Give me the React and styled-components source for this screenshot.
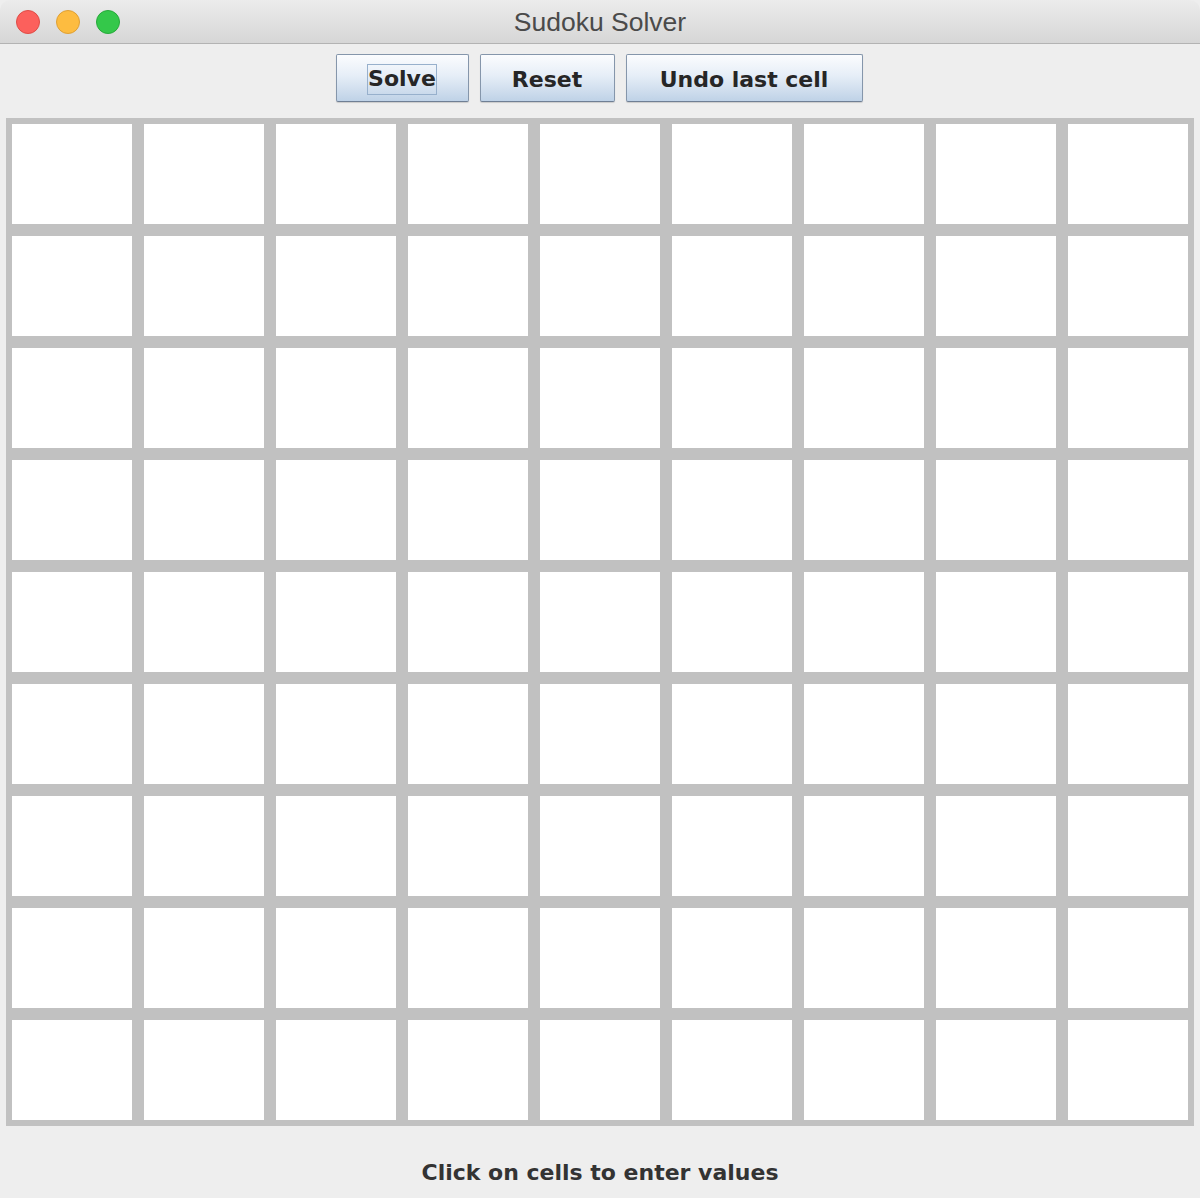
import React from 'react'
import styled, { createGlobalStyle } from 'styled-components'

const GlobalStyle = createGlobalStyle`
  html, body {
    margin: 0;
    padding: 0;
    background: #ffffff;
  }
  body {
    font-family: "DejaVu Sans", "Liberation Sans", sans-serif;
  }
`

const SIZE = 9

const App = () => {
  const cells = Array.from({ length: SIZE * SIZE }, (_, i) => i)

  return (
    <Window>
      <GlobalStyle />
      <TitleBar>
        <Lights>
          <Light color="#fc605c" edge="#df4c46" />
          <Light color="#fdbc40" edge="#dfa034" />
          <Light color="#34c84a" edge="#27a93a" />
        </Lights>
        <Title>Sudoku Solver</Title>
      </TitleBar>

      <Toolbar>
        <Button width={133}>
          <Focus>Solve</Focus>
        </Button>
        <Button width={135}>Reset</Button>
        <Button width={237}>Undo last cell</Button>
      </Toolbar>

      <Board>
        {cells.map(i => (
          <Cell key={i} />
        ))}
      </Board>

      <Status>Click on cells to enter values</Status>
    </Window>
  )
}

export default App

const Window = styled.div`
  width: 1200px;
  height: 1198px;
  background: #eeeeee;
  display: flex;
  flex-direction: column;
  overflow: hidden;
`

const TitleBar = styled.div`
  position: relative;
  height: 43px;
  flex-shrink: 0;
  border-radius: 10px 10px 0 0;
  background: linear-gradient(#ececec, #d6d6d6);
  border-bottom: 1px solid #b3b3b3;
  display: flex;
  align-items: center;
  justify-content: center;
`

const Lights = styled.div`
  position: absolute;
  left: 16px;
  top: 10px;
  display: flex;
  gap: 16px;
`

const Light = styled.span`
  width: 22px;
  height: 22px;
  border-radius: 50%;
  background: ${props => props.color};
  border: 1px solid ${props => props.edge};
`

const Title = styled.div`
  font-family: "Liberation Sans", Arial, sans-serif;
  font-size: 26.5px;
  color: #4a4a4a;
  margin-top: 1px;
`

const Toolbar = styled.div`
  display: flex;
  justify-content: center;
  gap: 11px;
  padding-top: 10px;
  padding-right: 2px;
  height: 48px;
`

const Button = styled.div`
  box-sizing: border-box;
  width: ${props => props.width}px;
  height: 48px;
  border: 1px solid #8596ab;
  border-bottom-color: #6f7f94;
  border-radius: 2px;
  background: linear-gradient(#fbfcfe 0%, #e6eef7 45%, #bfd2e7 100%);
  box-shadow: 0 1px 1px rgba(0, 0, 0, 0.15);
  display: flex;
  align-items: center;
  justify-content: center;
  font-family: "DejaVu Sans", sans-serif;
  font-weight: bold;
  font-size: 22px;
  color: #262626;
  padding-top: 3px;
`

const Focus = styled.span`
  border: 1px solid #97b0cc;
  padding: 1px 0 3px;
`

const Board = styled.div`
  margin: 16px 6px 0;
  padding: 6px;
  background: #c1c1c1;
  display: grid;
  grid-template-columns: repeat(${SIZE}, 120px);
  grid-auto-rows: 100px;
  gap: 12px;
`

const Cell = styled.div`
  background: #ffffff;
`

const Status = styled.div`
  flex: 1;
  display: flex;
  align-items: center;
  justify-content: center;
  padding-top: 20px;
  font-family: "DejaVu Sans", sans-serif;
  font-weight: bold;
  font-size: 22px;
  color: #333333;
`
